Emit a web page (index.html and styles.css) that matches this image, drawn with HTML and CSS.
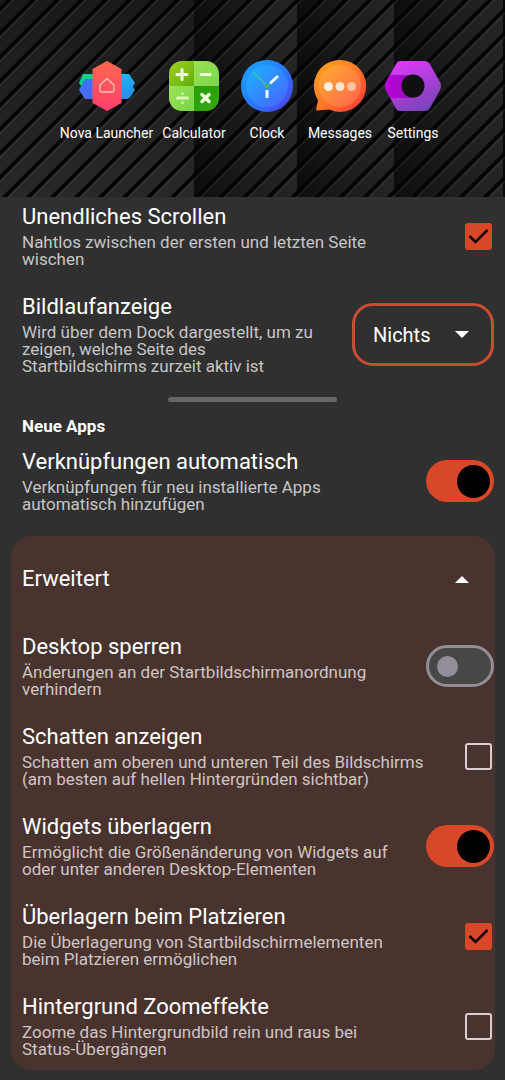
FILE: index.html
```
<!DOCTYPE html>
<html lang="de">
<head>
<meta charset="utf-8">
<meta name="viewport" content="width=device-width, initial-scale=1">
<title>Startbildschirm</title>
<link rel="stylesheet" href="styles.css">
</head>
<body>
<header class="preview">
  <div class="panels"><i></i><i></i><i></i><i></i></div>
  <div class="stripes"></div>
  <nav class="dock">
    <a class="app" href="#nova">
      <svg class="icon" viewBox="0 0 58 52" aria-hidden="true">
        <defs>
          <linearGradient id="nr" x1="0" y1="0" x2="0" y2="1"><stop offset="0" stop-color="#ff6750"/><stop offset="1" stop-color="#ff3f6c"/></linearGradient>
          <linearGradient id="nb" x1="0" y1="0" x2="1" y2="1"><stop offset="0" stop-color="#3478ff"/><stop offset="1" stop-color="#5264f5"/></linearGradient>
          <linearGradient id="nc" x1="0" y1="0" x2="0" y2="1"><stop offset="0" stop-color="#18b8f6"/><stop offset="1" stop-color="#3187f0"/></linearGradient>
        </defs>
        <path fill="#0bd184" d="M5 14H18V30H6L1 23Z"/>
        <path fill="#168f9f" d="M43 20H52L57 30L52 38H43Z"/>
        <path fill="url(#nb)" d="M7 19H18V39H7L1 30Z"/>
        <path fill="url(#nc)" d="M40 14H51L57 23L54 27L56 30L50 39H40Z"/>
        <path fill="url(#nr)" d="M29 1L43.500 9V43L29 51L14.500 43V9Z"/>
        <path fill="none" stroke="#ffc8b6" stroke-width="1.3" stroke-linejoin="round" d="M22 25L29 18.500L36 25V30.500Q36 32 34.500 32H23.500Q22 32 22 30.500Z"/>
      </svg>
      <span>Nova Launcher</span>
    </a>
    <a class="app" href="#calculator">
      <svg class="icon" viewBox="0 0 58 52" aria-hidden="true">
        <defs>
          <clipPath id="cc"><rect x="4" y="1" width="50" height="50" rx="13"/></clipPath>
          <linearGradient id="c1" x1="0" y1="0" x2="1" y2="1"><stop offset="0" stop-color="#a0d321"/><stop offset="1" stop-color="#60ad0c"/></linearGradient>
          <linearGradient id="c2" x1="0" y1="0" x2="1" y2="1"><stop offset="0" stop-color="#a9e85e"/><stop offset="1" stop-color="#6bd03e"/></linearGradient>
          <linearGradient id="c3" x1="0" y1="0" x2="1" y2="1"><stop offset="0" stop-color="#279d09"/><stop offset="1" stop-color="#36aa0a"/></linearGradient>
        </defs>
        <g clip-path="url(#cc)">
          <path fill="url(#c1)" d="M4 1H29V26H4Z"/><path fill="url(#c2)" d="M29 1H54V26H29ZM4 26H29V51H4Z"/><path fill="url(#c3)" d="M29 26H54V51H29Z"/>
        </g>
        <g stroke="#f1ffe2" stroke-width="3" stroke-linecap="round"><path d="M12 14.500H22M17 9.500V19.500M36 14.500H45"/><path stroke-width="3.500" d="M37 34.500L44 41.500M44 34.500L37 41.500"/><path stroke="#d8f7bd" d="M12.500 38H22.500"/></g>
        <circle cx="17.500" cy="33.500" r="1.500" fill="#c8f0ad"/><circle cx="17.500" cy="42.500" r="1.500" fill="#c8f0ad"/>
      </svg>
      <span>Calculator</span>
    </a>
    <a class="app" href="#clock">
      <svg class="icon" viewBox="0 0 58 52" aria-hidden="true">
        <defs>
          <linearGradient id="k1" x1="0" y1="0" x2="1" y2="1"><stop offset="0" stop-color="#18a8ff"/><stop offset=".55" stop-color="#2878ff"/><stop offset="1" stop-color="#5737f4"/></linearGradient>
          <linearGradient id="k2" x1="0" y1="0" x2="1" y2="1"><stop offset="0" stop-color="#18b6ff"/><stop offset="1" stop-color="#4b60ff"/></linearGradient>
        </defs>
        <circle cx="29" cy="26" r="26" fill="url(#k1)"/><circle cx="29" cy="26" r="21" fill="url(#k2)"/>
        <path stroke="#3fc8a8" stroke-width="1.500" d="M15 12L29 26"/>
        <path stroke="#e7faff" stroke-width="3" d="M32 23.500L40 16M29 30V38"/>
        <circle cx="29" cy="26" r="2.500" fill="#4cab67"/>
      </svg>
      <span>Clock</span>
    </a>
    <a class="app" href="#messages">
      <svg class="icon" viewBox="0 0 58 52" aria-hidden="true">
        <defs>
          <linearGradient id="m1" x1="0" y1="0" x2="1" y2="1"><stop offset="0" stop-color="#ffa51f"/><stop offset=".5" stop-color="#ff7928"/><stop offset="1" stop-color="#ff3038"/></linearGradient>
          <linearGradient id="m2" x1="0" y1="0" x2="1" y2="1"><stop offset="0" stop-color="#ffae2d"/><stop offset="1" stop-color="#ff6250"/></linearGradient>
        </defs>
        <path fill="url(#m1)" d="M29 0A26 26 0 1 1 18 49.500L5 50.500L7 40A26 26 0 0 1 29 0Z"/>
        <circle cx="29" cy="26" r="21" fill="url(#m2)"/>
        <circle cx="17.500" cy="26.500" r="4.500" fill="#fff0dc"/><circle cx="29" cy="26.500" r="4.500" fill="#ffe5cf"/><circle cx="40.500" cy="26.500" r="4.500" fill="#ffc49f"/>
      </svg>
      <span>Messages</span>
    </a>
    <a class="app" href="#settings">
      <svg class="icon" viewBox="0 0 58 52" aria-hidden="true">
        <defs>
          <linearGradient id="s1" x1=".2" y1="0" x2=".7" y2="1"><stop offset="0" stop-color="#e13afb"/><stop offset="1" stop-color="#7844b8"/></linearGradient>
          <linearGradient id="s2"><stop offset="0" stop-color="#bd00dd"/><stop offset="1" stop-color="#9112b5"/></linearGradient>
        </defs>
        <path fill="url(#s1)" d="M16 1H41Q44 1 45.500 3.500L56 22Q58 26 56 30L46 48Q44.500 51 41 51H16Q13 51 11.500 48L2 30Q0 26 2 22L12 4Q13.500 1 16 1Z"/>
        <path fill="url(#s2)" d="M5.500 15H29V38H6L2 30Q0 26 2 22Z"/>
        <circle cx="29" cy="26" r="11.500" fill="#101010"/>
      </svg>
      <span>Settings</span>
    </a>
  </nav>
</header>
<main>
  <section class="group scrolling">
    <div class="row">
      <label class="text" for="infinite"><span class="title">Unendliches Scrollen</span><span class="note">Nahtlos zwischen der ersten und letzten Seite<br>wischen</span></label>
      <input class="check" type="checkbox" id="infinite" checked>
    </div>
    <div class="row">
      <label class="text" for="indicator"><span class="title">Bildlaufanzeige</span><span class="note">Wird über dem Dock dargestellt, um zu<br>zeigen, welche Seite des<br>Startbildschirms zurzeit aktiv ist</span></label>
      <div class="picker">
        <select id="indicator"><option>Nichts</option></select>
        <svg class="arrow" viewBox="0 0 14 7" aria-hidden="true"><path d="M0 0H14L7 7Z"/></svg>
      </div>
    </div>
  </section>
  <div class="handle"></div>
  <section class="group">
    <h2>Neue Apps</h2>
    <div class="row">
      <label class="text" for="auto"><span class="title">Verknüpfungen automatisch</span><span class="note">Verknüpfungen für neu installierte Apps<br>automatisch hinzufügen</span></label>
      <input class="switch" type="checkbox" role="switch" id="auto" checked>
    </div>
  </section>
  <section class="card">
    <button class="expander" type="button" aria-expanded="true">Erweitert
      <svg class="arrow" viewBox="0 0 14 7" aria-hidden="true"><path d="M0 7H14L7 0Z"/></svg>
    </button>
    <div class="row">
      <label class="text" for="lock"><span class="title">Desktop sperren</span><span class="note">Änderungen an der Startbildschirmanordnung<br>verhindern</span></label>
      <input class="switch" type="checkbox" role="switch" id="lock">
    </div>
    <div class="row">
      <label class="text" for="shadow"><span class="title">Schatten anzeigen</span><span class="note">Schatten am oberen und unteren Teil des Bildschirms<br>(am besten auf hellen Hintergründen sichtbar)</span></label>
      <input class="check" type="checkbox" id="shadow">
    </div>
    <div class="row">
      <label class="text" for="overlap"><span class="title">Widgets überlagern</span><span class="note">Ermöglicht die Größenänderung von Widgets auf<br>oder unter anderen Desktop-Elementen</span></label>
      <input class="switch" type="checkbox" role="switch" id="overlap" checked>
    </div>
    <div class="row">
      <label class="text" for="placing"><span class="title">Überlagern beim Platzieren</span><span class="note">Die Überlagerung von Startbildschirmelementen<br>beim Platzieren ermöglichen</span></label>
      <input class="check" type="checkbox" id="placing" checked>
    </div>
    <div class="row">
      <label class="text" for="zoom"><span class="title">Hintergrund Zoomeffekte</span><span class="note">Zoome das Hintergrundbild rein und raus bei<br>Status-Übergängen</span></label>
      <input class="check" type="checkbox" id="zoom">
    </div>
  </section>
</main>
</body>
</html>
```
FILE: styles.css
```
* { box-sizing: border-box; }

body {
  margin: 0;
  background: #303030;
  color: #fff;
  font-family: Roboto, "Liberation Sans", sans-serif;
}

.preview {
  position: relative;
  overflow: hidden;
  padding: 60px 0 54px;
  background: #1c1c1c;
}

.panels, .stripes { position: absolute; inset: 0; }

.panels {
  display: grid;
  grid-template-columns: 194fr 103fr 97fr 109fr 2fr;
  background: #080808;
}

.panels i { background: linear-gradient(90deg, #0c0c0c, #1c1c1c 50%, #252525); }
.panels i:first-child { background: linear-gradient(180deg, #1a1a1a, #282828); }

.stripes {
  background: repeating-linear-gradient(135deg, transparent 0 4px, #040404 5px 8px, #ffffff14 9px, transparent 11px 17px);
}

.dock {
  position: relative;
  display: grid;
  grid-template-columns: 102px repeat(4, 73px);
  justify-content: center;
}

.app {
  display: flex;
  flex-direction: column;
  align-items: center;
  gap: 11px;
  color: #fff;
  font-size: 14px;
  line-height: 20px;
  text-decoration: none;
  white-space: nowrap;
}

.icon { width: 58px; height: 52px; }

.group { padding: 0 11px 0 22px; }
.scrolling { padding-top: 7px; }

.row {
  display: flex;
  align-items: center;
  justify-content: space-between;
}

.row + .row { margin-top: 26px; }

.text { white-space: nowrap; }
.title { display: block; font-size: 22px; line-height: 26px; }
.note {
  display: block;
  margin-top: 4px;
  color: #c6c6c6;
  font-size: 17px;
  line-height: 17px;
}

.card .note { color: #cfc5c3; }

.check, .switch {
  appearance: none;
  flex: none;
  margin: 0;
}

.check {
  width: 27px;
  height: 27px;
  margin-right: 2px;
  border: 2px solid #dccdd0;
  border-radius: 3px;
}

.check:checked {
  border: 0;
  background: #d84727 url("data:image/svg+xml,%3Csvg xmlns='http://www.w3.org/2000/svg' viewBox='0 0 27 27'%3E%3Cpath fill='none' stroke='%23150503' stroke-width='2.5' d='M4.500 13L10.500 19L22.500 7'/%3E%3C/svg%3E");
}

.switch {
  display: flex;
  align-items: center;
  width: 68px;
  height: 42px;
  padding: 0 8px;
  border: 3px solid #928d96;
  border-radius: 21px;
  background: #474747;
}

.switch::before {
  content: "";
  width: 21px;
  height: 21px;
  border-radius: 50%;
  background: #928d96;
}

.switch:checked {
  justify-content: flex-end;
  padding: 0 4px;
  border: 0;
  background: #d84727;
}

.switch:checked::before { width: 33px; height: 33px; background: #000; }

.picker { position: relative; flex: none; width: 142px; }

.picker select {
  appearance: none;
  display: block;
  width: 100%;
  height: 63px;
  padding: 0 18px;
  border: 3px solid #cc4c33;
  border-radius: 21px;
  background: transparent;
  color: #fff;
  font: 20px/24px Roboto, "Liberation Sans", sans-serif;
}

.arrow { width: 14px; height: 7px; fill: #fff; }

.picker .arrow { position: absolute; top: 28px; right: 25px; pointer-events: none; }

.handle {
  width: 169px;
  height: 5px;
  margin: 22px auto 14px;
  border-radius: 3px;
  background: #666;
}

h2 { margin: 0 0 13px; font-size: 17px; line-height: 20px; font-weight: 700; }

.card {
  margin: 23px 10px 10px 11px;
  padding: 0 1px 12px 11px;
  border-radius: 21px;
  background: #49332f;
}

.expander {
  display: flex;
  align-items: center;
  justify-content: space-between;
  width: 100%;
  height: 86px;
  margin-bottom: 12px;
  padding: 0 25px 0 0;
  border: 0;
  background: none;
  color: #fff;
  font: 22px/26px Roboto, "Liberation Sans", sans-serif;
}
```
